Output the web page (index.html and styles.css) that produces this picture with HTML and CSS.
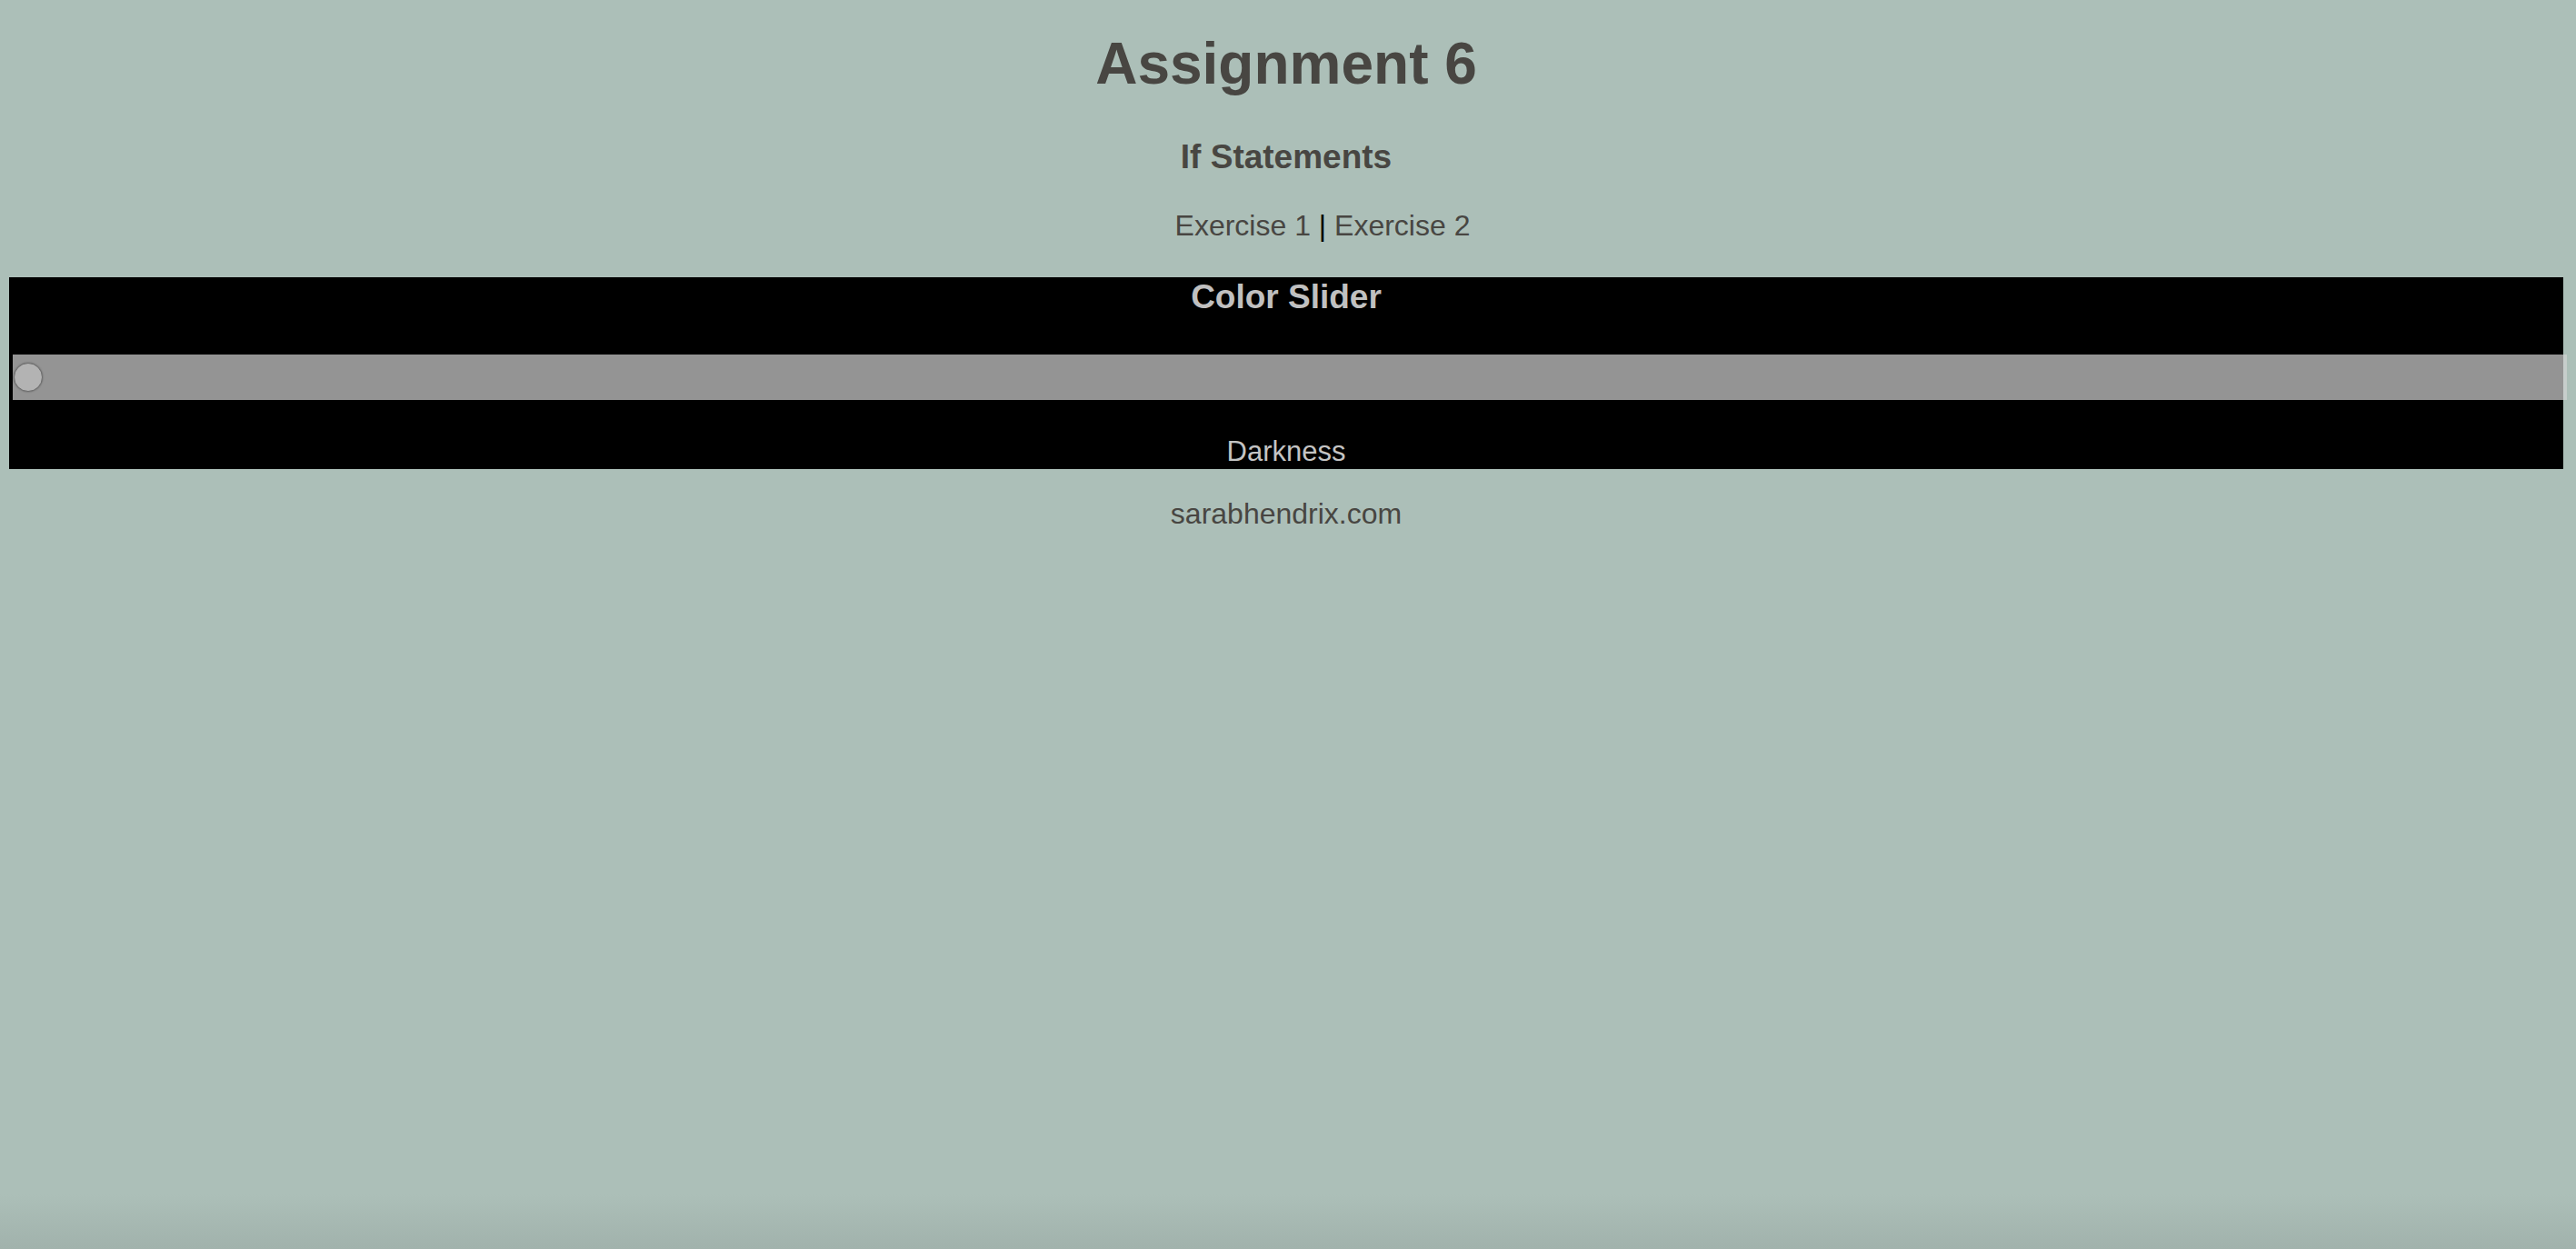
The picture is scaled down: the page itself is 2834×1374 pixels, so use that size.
FILE: index.html
```html
<!DOCTYPE html>
<html lang="en">
<head>
<meta charset="utf-8">
<title>Assignment 6</title>
<link rel="stylesheet" href="styles.css">
</head>
<body>
  <header class="page-header">
    <h1 class="title">Assignment 6</h1>
    <h2 class="subtitle">If Statements</h2>
    <nav class="nav"><a class="nav-link" href="#">Exercise 1</a> | <a class="nav-link" href="#">Exercise 2</a></nav>
  </header>
  <section class="slider-box">
    <h2 class="slider-title">Color Slider</h2>
    <input class="slider" type="range" min="0" max="255" value="0">
    <p class="slider-label">Darkness</p>
  </section>
  <footer class="footer">sarabhendrix.com</footer>
</body>
</html>
```
FILE: styles.css
```css
html {
  min-height: 100%;
  background: linear-gradient(to bottom, #acbfb8 0, #acbfb8 calc(100% - 60px), #a1b2ac 100%);
}

body {
  margin: 0 4px 0 0;
  min-height: 1374px;
  font-family: "Liberation Sans", Arial, sans-serif;
  color: #484642;
}

.page-header {
  display: flex;
  flex-direction: column;
  padding-top: 30px;
}

.title {
  margin: 0;
  text-align: center;
  font-size: 64px;
  line-height: 80px;
  font-weight: bold;
}

.subtitle {
  margin: 41px 0 0;
  text-align: center;
  font-size: 37px;
  line-height: 44px;
  font-weight: bold;
}

.nav {
  margin-top: 34px;
  padding-left: 80px;
  text-align: center;
  font-size: 32px;
  line-height: 38px;
  color: #000;
}

.nav-link {
  color: #484642;
  text-decoration: none;
}

.slider-box {
  margin: 38px 10px 0;
  padding: 1px 0 1px;
  background: #000;
  display: flex;
  flex-direction: column;
  text-align: center;
}

.slider-title {
  margin: 0 0 42px;
  font-size: 37px;
  line-height: 42px;
  font-weight: bold;
  color: #c0c0c0;
}

.slider {
  -webkit-appearance: none;
  appearance: none;
  display: block;
  width: 100%;
  height: 50px;
  margin: 0 0 0 4px;
  padding: 0;
  background: #d3d3d3;
  opacity: 0.7;
  outline: none;
  border: none;
}

.slider::-webkit-slider-thumb {
  -webkit-appearance: none;
  appearance: none;
  width: 32px;
  height: 32px;
  margin-left: 1px;
  border-radius: 50%;
  background: #fff;
  border: 1px solid #9a9a9a;
  box-shadow: 0 0 2px rgba(0, 0, 0, 0.35);
  box-sizing: border-box;
}

.slider-label {
  margin: 39px 0 0;
  font-size: 31px;
  line-height: 36px;
  color: #c4c4c4;
}

.footer {
  margin-top: 31px;
  text-align: center;
  font-size: 32px;
  line-height: 37px;
}
```
